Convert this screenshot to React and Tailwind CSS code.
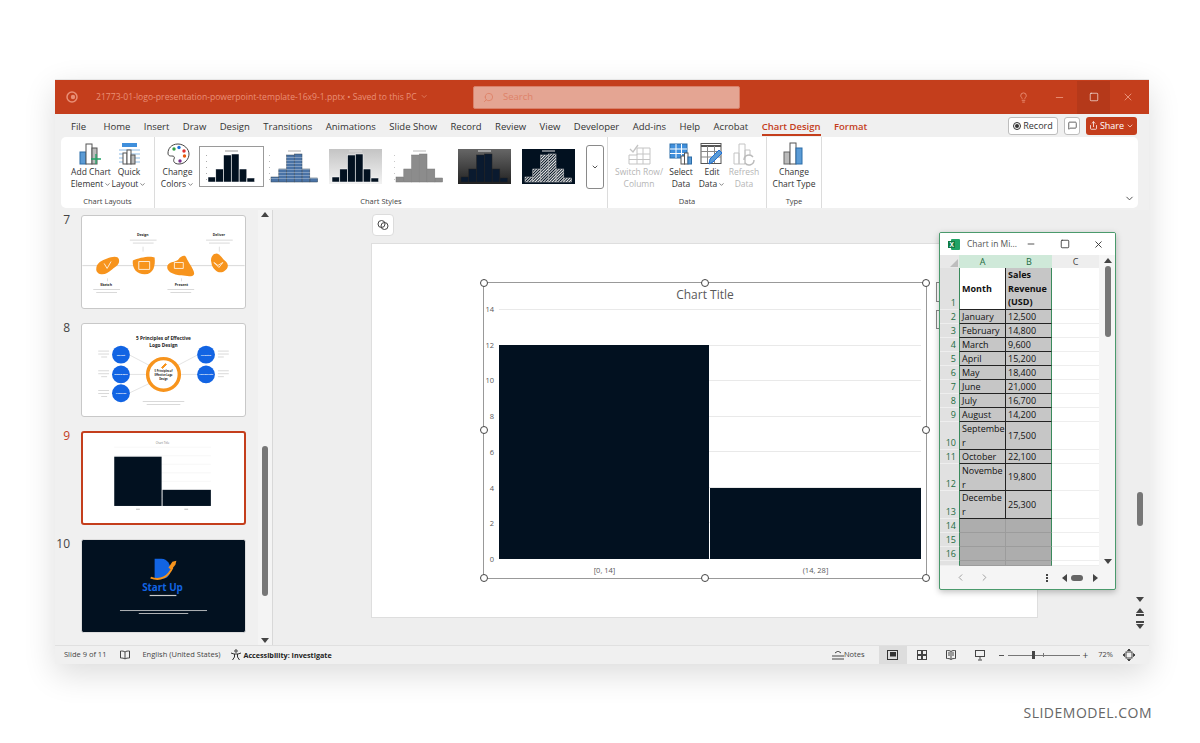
import React from "react";
import { ChevronDown, ChevronLeft, ChevronRight, Lightbulb, MessageSquare, Search, Share, X, Minus, Square } from "lucide-react";

const tabs = ["File", "Home", "Insert", "Draw", "Design", "Transitions", "Animations", "Slide Show", "Record", "Review", "View", "Developer", "Add-ins", "Help", "Acrobat"];

const AddChartIcon = () => (
  <svg width="24" height="24" viewBox="0 0 24 24">
    <rect x="1" y="10" width="6" height="12" fill="#5b9bd5" stroke="#2b6ca8" />
    <rect x="7" y="2" width="6" height="20" fill="#fff" stroke="#555" />
    <rect x="13" y="6" width="5" height="16" fill="#bbb" stroke="#555" />
    <path d="M17 12v10M12 17h10" stroke="#21a366" strokeWidth="1.3" />
  </svg>
);

const QuickLayoutIcon = () => (
  <svg width="24" height="24" viewBox="0 0 24 24">
    <rect x="5" y="1" width="15" height="4" fill="#3f8fdc" />
    <path d="M2 8h21M2 12h21M2 16h21M2 20h21" stroke="#8dbbe6" />
    <rect x="6" y="11" width="4" height="11" fill="#fff" stroke="#555" />
    <rect x="10" y="8" width="4" height="14" fill="#fff" stroke="#555" />
    <rect x="14" y="13" width="4" height="9" fill="#bbb" stroke="#555" />
  </svg>
);

const PaletteIcon = () => (
  <svg width="24" height="24" viewBox="0 0 24 24">
    <path d="M12 2C5 2 2 7 2 11c0 3 2 3 4 3s3 1 2 3 0 5 5 5c6 0 10-5 10-10S18 2 12 2z" fill="#fff" stroke="#444" />
    <circle cx="8" cy="7" r="1.7" fill="#2f9e44" />
    <circle cx="13" cy="5.5" r="1.7" fill="#1c6fd8" />
    <circle cx="18" cy="9" r="1.7" fill="#e03131" />
    <circle cx="18.5" cy="14" r="1.7" fill="#e8590c" />
    <circle cx="14" cy="19" r="1.7" fill="#7b2d8e" />
  </svg>
);

const SwitchIcon = () => (
  <svg width="24" height="24" viewBox="0 0 24 24">
    <path d="M10 6h13v16H2V13h8zM2 17.500h21M10 12v10M16 6v16M10 12h13" fill="none" stroke="#c4c4c4" />
    <path d="M3 7l3 3 5-7" fill="none" stroke="#c4c4c4" strokeWidth="1.3" />
  </svg>
);

const SelectDataIcon = () => (
  <svg width="24" height="24" viewBox="0 0 24 24">
    <rect x="1" y="2" width="17" height="14" fill="#3f8fdc" stroke="#2b6ca8" />
    <path d="M1 7h17M1 11.500h17M7 2v14M12.500 2v14" stroke="#fff" />
    <rect x="12" y="14" width="3.500" height="8" fill="#fff" stroke="#555" />
    <rect x="15.500" y="11" width="3.500" height="11" fill="#fff" stroke="#555" />
    <rect x="19" y="15" width="3.500" height="7" fill="#5b9bd5" stroke="#2b6ca8" />
  </svg>
);

const EditDataIcon = () => (
  <svg width="24" height="24" viewBox="0 0 24 24">
    <rect x="1" y="1.500" width="20" height="20" fill="#fff" stroke="#555" />
    <path d="M1 4h20" stroke="#555" strokeWidth="2" />
    <path d="M1 9.500h20M1 15h20M7.500 4v17M14.500 4v17" stroke="#888" />
    <path d="M9 22l1-5 9-9 3 3-9 9z" fill="#5b9bd5" stroke="#1c6fd8" />
  </svg>
);

const RefreshIcon = () => (
  <svg width="24" height="24" viewBox="0 0 24 24">
    <path d="M2 22V11h5v11zM7 22V2h6v20zM13 22V8h5v6" fill="#fff" stroke="#c4c4c4" />
    <path d="M12 18a5 5 0 0 1 9-3M22 18a5 5 0 0 1-9 3" fill="none" stroke="#bbb" strokeWidth="1.4" />
  </svg>
);

const ChartTypeIcon = () => (
  <svg width="24" height="24" viewBox="0 0 24 24">
    <rect x="2" y="10" width="6" height="12" fill="#bbb" stroke="#666" />
    <rect x="8" y="1" width="6" height="21" fill="#fff" stroke="#555" />
    <rect x="14" y="6" width="6" height="16" fill="#5b9bd5" stroke="#2b6ca8" />
  </svg>
);

const RibbonBtn = ({ icon, lines, w, faded, caret }) => (
  <div className={`flex flex-col items-center shrink-0 ${faded ? "text-[#b5b5b5]" : "text-[#333]"}`} style={{ width: w }}>
    <div className="h-[24px] flex items-center mt-[5px]">{icon}</div>
    <div className="text-[8.5px] leading-[12px] text-center whitespace-nowrap">
      <div>{lines[0]}</div>
      <div className="flex items-center justify-center gap-[1px]">
        {lines[1]}
        {caret && <ChevronDown size={7} strokeWidth={2} />}
      </div>
    </div>
  </div>
);

const heights = [5, 13, 27, 28, 13, 4];

const StyleThumb = ({ id, top, bottom, fill, stroke, selected, hatch, stripes, w, axis }) => (
  <div className={`flex items-center justify-center shrink-0 h-[41px] ${selected ? "border border-[#9a9a9a] bg-white" : ""}`} style={{ width: w }}>
    <svg width="53" height="35" viewBox="0 0 53 35">
      <defs>
        <linearGradient id={id} x1="0" y1="0" x2="0" y2="1">
          <stop offset="0" stopColor={top} />
          <stop offset="1" stopColor={bottom} />
        </linearGradient>
        <pattern id="hatch" width="2" height="2" patternUnits="userSpaceOnUse" patternTransform="rotate(45)">
          <rect width="2" height="2" fill="#021120" />
          <rect width="1" height="2" fill="#eee" />
        </pattern>
      </defs>
      <rect width="53" height="35" fill={`url(#${id})`} />
      <rect x="20" y="1.500" width="13" height="1" fill={axis || "#ddd"} />
      {axis && [6, 12, 18, 24, 30].map((y) => <rect key={y} x="1" y={y} width="1" height="0.800" fill={axis} />)}
      {heights.map((h, i) => (
        <rect key={i} x={3 + i * 7.8} y={33 - h} width="7.600" height={h} fill={hatch ? "url(#hatch)" : fill} stroke={stroke} strokeWidth="0.5" />
      ))}
      {stripes && [8, 11, 14, 17, 20, 23, 26, 29].map((y) => <rect key={y} x="3" y={y} width="47" height="0.600" fill="#fff" opacity="0.5" />)}
    </svg>
  </div>
);

const Group = ({ label, w, children, pl }) => (
  <div className="flex flex-col h-full shrink-0 border-r border-[#dcdcdc]" style={{ width: w }}>
    <div className="flex flex-1" style={{ paddingLeft: pl }}>{children}</div>
    <div className="h-[12px] text-[7.500px] leading-[10px] text-center text-[#444]">{label}</div>
  </div>
);

const Thumb7 = () => (
  <svg width="100%" height="100%" viewBox="0 0 164 93">
    <rect x="0" y="49.500" width="164" height="1.200" fill="#ddd" />
    <path d="M14 54c0-7 6-9 11-11 5-2 11-3 12 1 1 5-3 7-7 10-4 3-6 5-10 5-3 0-6-2-6-5z" fill="#f7941d" />
    <path d="M51 45c6-3 18-5 22-3 1 8-1 17-10 17-8 0-13-6-12-14z" fill="#f7941d" />
    <path d="M86 50c2-4 8-3 11-6 3-4 7-5 8-2 2 5 8 12 8 16 0 4-7 3-13 2-5 0-16-3-14-10z" fill="#f7941d" />
    <path d="M130 45c0-5 3-7 6-7 4 1 5 5 9 8 3 3 3 7-2 10-6 3-10-2-12-6z" fill="#f7941d" />
    <path d="M22 48l3 5 4-7M57 46h11v8H57zM93 47h9v6h-9zM133 47l4 3 5-3-4 5z" fill="none" stroke="#fff" strokeWidth="0.800" />
    <g fontFamily="'Open Sans', sans-serif" fontWeight="700" fill="#222" fontSize="3.500" textAnchor="middle">
      <text x="61" y="20">Design</text>
      <text x="138" y="20">Deliver</text>
      <text x="24" y="71">Sketch</text>
      <text x="100" y="71">Present</text>
    </g>
    <g fill="#c8c8c8">
      <rect x="48" y="24" width="27" height="0.700" /><rect x="51" y="27" width="21" height="0.700" />
      <rect x="125" y="24" width="27" height="0.700" /><rect x="128" y="27" width="21" height="0.700" />
      <rect x="11" y="74" width="27" height="0.700" /><rect x="14" y="77" width="21" height="0.700" />
      <rect x="86" y="74" width="27" height="0.700" /><rect x="89" y="77" width="21" height="0.700" />
      <rect x="61" y="31" width="0.600" height="5" /><rect x="138" y="31" width="0.600" height="5" />
      <rect x="25" y="63" width="0.600" height="3" /><rect x="100" y="63" width="0.600" height="3" />
    </g>
  </svg>
);

const Thumb8 = () => (
  <svg width="100%" height="100%" viewBox="0 0 164 93">
    <path d="M47 31L68 42M47 51H64M47 70L68 60M117 31L96 42M117 51H100" stroke="#ddd" strokeWidth="0.800" />
    <circle cx="82" cy="51" r="16" fill="#fff" stroke="#f7941d" strokeWidth="3.500" />
    <path d="M80 44l4-4 1 1-4 4z" fill="#f7941d" stroke="#f7941d" />
    <g fill="#1264e3">
      <circle cx="39" cy="31" r="9" /><circle cx="39" cy="51" r="9" /><circle cx="39" cy="70" r="9" />
      <circle cx="125" cy="31" r="9" /><circle cx="125" cy="51" r="9" />
    </g>
    <g fontFamily="'Open Sans', sans-serif" fontWeight="700" textAnchor="middle">
      <text x="82" y="16" fontSize="4.800" fill="#222">5 Principles of Effective</text>
      <text x="82" y="23" fontSize="4.800" fill="#222">Logo Design</text>
      <text x="82" y="49" fontSize="2.600" fill="#222">5 Principles of</text>
      <text x="82" y="53" fontSize="2.600" fill="#222">Effective Logo</text>
      <text x="82" y="57" fontSize="2.600" fill="#222">Design</text>
      <g fill="#fff" fontSize="2.400">
        <text x="39" y="32">Weight</text>
        <text x="39" y="52">Memorable</text>
        <text x="39" y="71">Timeless</text>
        <text x="125" y="32">Versatile</text>
        <text x="125" y="52">Appropriate</text>
      </g>
    </g>
    <g fill="#c8c8c8">
      <rect x="16" y="27" width="11" height="0.700" /><rect x="16" y="30" width="11" height="0.700" /><rect x="19" y="33" width="6" height="0.700" />
      <rect x="16" y="47" width="11" height="0.700" /><rect x="16" y="50" width="11" height="0.700" /><rect x="19" y="53" width="6" height="0.700" />
      <rect x="16" y="67" width="11" height="0.700" /><rect x="16" y="70" width="11" height="0.700" /><rect x="19" y="73" width="6" height="0.700" />
      <rect x="137" y="27" width="11" height="0.700" /><rect x="137" y="30" width="11" height="0.700" /><rect x="137" y="33" width="6" height="0.700" />
      <rect x="137" y="47" width="11" height="0.700" /><rect x="137" y="50" width="11" height="0.700" /><rect x="137" y="53" width="6" height="0.700" />
      <rect x="61" y="78" width="42" height="0.700" /><rect x="65" y="81" width="34" height="0.700" />
    </g>
  </svg>
);

const Thumb9 = () => (
  <svg width="100%" height="100%" viewBox="0 0 166 95">
    <path d="M31 15H133M31 24H133M31 33H133M31 42H133M31 51H133M31 60H133M31 69H133" stroke="#eee" strokeWidth="0.500" />
    <text x="82" y="12" fontSize="3" fill="#777" textAnchor="middle" fontFamily="'Open Sans', sans-serif">Chart Title</text>
    <rect x="31" y="25" width="50" height="52" fill="#021120" />
    <rect x="82" y="60" width="51" height="17" fill="#021120" />
    <rect x="54" y="80" width="4" height="0.800" fill="#aaa" />
    <rect x="105" y="80" width="4" height="0.800" fill="#aaa" />
  </svg>
);

const Thumb10 = () => (
  <svg width="100%" height="100%" viewBox="0 0 164 93">
    <rect width="164" height="93" fill="#021120" />
    <path d="M73 19h7c6 0 9 6 9 11 0 5-3 9-8 9h-8z" fill="#1264e3" />
    <path d="M69 38c10 4 18-1 22-10" fill="none" stroke="#f7941d" strokeWidth="2" />
    <path d="M87 28l4-6 4-1-1 4-4 5z" fill="#f7941d" />
    <text x="81" y="52" fontSize="10" fontWeight="700" fill="#1264e3" textAnchor="middle" fontFamily="'Open Sans', sans-serif">Start Up</text>
    <rect x="68" y="55.500" width="27" height="1.200" fill="#ccc" />
    <rect x="38" y="71" width="88" height="0.800" fill="#ddd" />
    <rect x="57" y="74" width="50" height="0.800" fill="#ddd" />
  </svg>
);

const Slide = ({ n, active, dark, children }) => (
  <div className="flex shrink-0 h-[94px] mb-[14px]">
    <div className={`w-[26px] text-[12px] leading-[14px] text-right pr-[11px] -mt-[2px] ${active ? "text-[#c43e1c]" : "text-[#444]"}`}>{n}</div>
    <div className={`w-[165px] rounded-[3px] overflow-hidden ${active ? "border-2 border-[#c43e1c] bg-white" : dark ? "bg-[#021120] border border-[#ddd]" : "bg-white border border-[#c8c8c8]"}`}>
      {children}
    </div>
  </div>
);

const gridLabels = [14, 12, 10, 8, 6, 4, 2, 0];

const Handle = ({ className }) => (
  <div className={`absolute w-[8px] h-[8px] rounded-full bg-white border border-[#444] ${className}`} />
);

const rowsData = [
  { n: 1, h: 42 },
  { n: 2, h: 14, a: "January", b: "12,500" },
  { n: 3, h: 14, a: "February", b: "14,800" },
  { n: 4, h: 14, a: "March", b: "9,600" },
  { n: 5, h: 14, a: "April", b: "15,200" },
  { n: 6, h: 14, a: "May", b: "18,400" },
  { n: 7, h: 14, a: "June", b: "21,000" },
  { n: 8, h: 14, a: "July", b: "16,700" },
  { n: 9, h: 14, a: "August", b: "14,200" },
  { n: 10, h: 28, a: "Septembe", a2: "r", b: "17,500" },
  { n: 11, h: 14, a: "October", b: "22,100" },
  { n: 12, h: 27, a: "Novembe", a2: "r", b: "19,800" },
  { n: 13, h: 28, a: "Decembe", a2: "r", b: "25,300" },
  { n: 14, h: 14 },
  { n: 15, h: 14 },
  { n: 16, h: 14 },
  { n: "", h: 5 },
];

const ExcelWindow = () => (
  <div className="absolute left-[884px] top-[152px] w-[177px] h-[358px] bg-[#f5f5f5] border border-[#4a9a6c] rounded-[2px] flex flex-col overflow-hidden shadow-[0_2px_6px_rgba(0,0,0,0.25)]">
    <div className="h-[22px] shrink-0 bg-white flex items-center pl-[8px] text-[#555]">
      <svg width="12" height="11" viewBox="0 0 12 11">
        <rect x="3" y="0" width="9" height="11" rx="1" fill="#21a366" />
        <rect x="0" y="2" width="7" height="7" fill="#107c41" />
        <text x="1.500" y="8" fontSize="6.500" fontWeight="700" fill="#fff" fontFamily="'Liberation Sans', sans-serif">X</text>
      </svg>
      <span className="ml-[7px] text-[8.500px] w-[58px] whitespace-nowrap">Chart in Mi...</span>
      <Minus size={10} className="ml-[1px] text-[#333]" />
      <Square size={10} className="ml-[24px] text-[#333]" />
      <X size={11} className="ml-[23px] text-[#333]" />
    </div>
    <div className="flex flex-1 min-h-0">
      <div className="w-[160px] shrink-0 overflow-hidden">
        <div className="flex h-[13px] text-[9px] leading-[13px] text-center text-[#444]">
          <div className="w-[19px] bg-[#e8e8e8] flex items-end justify-end">
            <div className="w-0 h-0 border-l-[8px] border-l-transparent border-b-[8px] border-b-[#bdbdbd] mr-[1px] mb-[1px]" />
          </div>
          <div className="w-[47px] bg-[#cfe9d9] text-[#1d6b41]">A</div>
          <div className="w-[46px] bg-[#cfe9d9] text-[#1d6b41]">B</div>
          <div className="w-[47px] bg-[#eeeeee]">C</div>
        </div>
        {rowsData.map((r) => {
          const empty = r.n !== 1 && !r.a;
          return (
            <div key={r.n} className="flex text-[9px] leading-[13.500px] text-[#111]" style={{ height: r.h }}>
              <div className="w-[19px] shrink-0 bg-[#e1e1e1] text-[#1d6b41] text-right pr-[3px] flex items-end justify-end border-b border-[#eeeeee]">{r.n}</div>
              {r.n === 1 ? (
                <>
                  <div className="w-[47px] shrink-0 bg-white font-bold pl-[2px] flex items-center border-l border-[#3a8a5c] border-b border-b-[#222] border-r border-r-[#222]">Month</div>
                  <div className="w-[46px] shrink-0 bg-[#c6c6c6] font-bold pl-[2px] border-b border-[#222] border-r border-r-[#3a8a5c]">
                    Sales<br />Revenue<br />(USD)
                  </div>
                </>
              ) : empty ? (
                <>
                  <div className="w-[47px] shrink-0 bg-[#adadad] border-l border-[#3a8a5c] border-r border-r-[#9c9c9c] border-b border-b-[#9c9c9c]" />
                  <div className="w-[46px] shrink-0 bg-[#adadad] border-r border-[#3a8a5c] border-b border-b-[#9c9c9c]" />
                </>
              ) : (
                <>
                  <div className="w-[47px] shrink-0 bg-[#c6c6c6] pl-[2px] border-l border-[#3a8a5c] border-b border-b-[#222] border-r border-r-[#222] whitespace-nowrap overflow-hidden">
                    {r.a}
                    {r.a2 && <div>{r.a2}</div>}
                  </div>
                  <div className="w-[46px] shrink-0 bg-[#c6c6c6] pl-[2px] border-b border-[#222] border-r border-r-[#3a8a5c] flex items-center">{r.b}</div>
                </>
              )}
              <div className="w-[47px] shrink-0 bg-white border-b border-[#eeeeee]" />
            </div>
          );
        })}
      </div>
      <div className="flex-1 flex flex-col items-center pt-[3px]">
        <div className="w-0 h-0 border-x-[4px] border-x-transparent border-b-[5px] border-b-[#444]" />
        <div className="w-[6px] h-[71px] mt-[3px] rounded-full bg-[#777]" />
        <div className="flex-1" />
        <div className="w-0 h-0 border-x-[4px] border-x-transparent border-t-[5px] border-t-[#444] mb-[2px]" />
      </div>
    </div>
    <div className="h-[23px] shrink-0 flex items-center text-[#999]">
      <ChevronLeft size={11} className="ml-[15px]" />
      <ChevronRight size={11} className="ml-[13px]" />
      <div className="ml-[56px] flex flex-col gap-[1px]">
        <div className="w-[2px] h-[2px] bg-[#444]" /><div className="w-[2px] h-[2px] bg-[#444]" /><div className="w-[2px] h-[2px] bg-[#444]" />
      </div>
      <div className="ml-[14px] flex items-center gap-[4px]">
        <div className="w-0 h-0 border-y-[4px] border-y-transparent border-r-[5px] border-r-[#444]" />
        <div className="w-[12px] h-[6px] rounded-full bg-[#666]" />
        <div className="w-0 h-0 border-y-[4px] border-y-transparent border-l-[5px] border-l-[#444] ml-[6px]" />
      </div>
    </div>
  </div>
);

export default function App() {
  return (
    <div className="w-[1200px] h-[743px] bg-white pt-[79px] pl-[55px] overflow-hidden text-[#333]" style={{ fontFamily: "'Open Sans', sans-serif" }}>
      <div className="relative w-[1094px] h-[585px] bg-[#f0f0f0] flex flex-col shadow-[0_10px_30px_rgba(0,0,0,0.14)] border-t border-[#e6e6e6]">
        {/* title bar */}
        <div className="h-[34px] shrink-0 bg-[#c43e1c] flex items-center text-[#e98f76]">
          <svg width="12" height="12" viewBox="0 0 12 12" className="ml-[11px]">
            <circle cx="6" cy="6" r="5" fill="none" stroke="#e98f76" strokeWidth="1.500" />
            <circle cx="7" cy="6" r="2.200" fill="#e98f76" />
          </svg>
          <span className="ml-[18px] w-[332px] text-[8.600px] whitespace-nowrap flex items-center gap-[3px]">
            21773-01-logo-presentation-powerpoint-template-16x9-1.pptx • Saved to this PC
            <ChevronDown size={9} />
          </span>
          <div className="ml-[45px] w-[267px] h-[23px] rounded-[2px] bg-[#e4a593] border border-[#d9816a] flex items-center pl-[9px] text-[#de8268] text-[9.500px]">
            <Search size={11} className="-scale-x-100" />
            <span className="ml-[9px]">Search</span>
          </div>
          <Lightbulb size={11} className="ml-[278px]" />
          <Minus size={11} className="ml-[25px]" />
          <div className="ml-[12px] w-[33px] h-[33px] bg-[#b5391a] flex items-center justify-center">
            <Square size={10} strokeWidth={1.500} className="text-white" />
          </div>
          <X size={12} className="ml-[12px]" />
        </div>

        {/* tabs */}
        <div className="h-[23px] shrink-0 flex items-center text-[9.500px] pl-[16px]">
          <div className="flex gap-[13.450px] whitespace-nowrap text-[#333] mt-[3px]">
            {tabs.map((t) => (
              <span key={t} className={t === "File" ? "mr-[4px]" : ""}>{t}</span>
            ))}
            <span className="text-[#c43e1c] font-semibold border-b-2 border-[#c43e1c] -mb-[2px]">Chart Design</span>
            <span className="text-[#c43e1c] font-semibold">Format</span>
          </div>
          <div className="ml-auto mr-[12px] flex items-center">
            <div className="w-[50px] h-[18px] bg-white border border-[#bdbdbd] rounded-[3px] flex items-center justify-center gap-[2px] text-[9px]">
              <div className="w-[8px] h-[8px] rounded-full border border-[#333] flex items-center justify-center">
                <div className="w-[4px] h-[4px] rounded-full bg-[#333]" />
              </div>
              Record
            </div>
            <div className="ml-[6px] w-[16px] h-[18px] bg-white border border-[#bdbdbd] rounded-[3px] flex items-center justify-center">
              <MessageSquare size={9} />
            </div>
            <div className="ml-[6px] w-[51px] h-[18px] bg-[#c43e1c] rounded-[3px] flex items-center justify-center gap-[2px] text-white text-[9px]">
              <Share size={9} />
              Share
              <ChevronDown size={8} />
            </div>
          </div>
        </div>

        {/* ribbon */}
        <div className="h-[71px] shrink-0 mx-[6px] w-[1077px] bg-white rounded-[5px] flex items-stretch relative">
          <Group label="Chart Layouts" w={94} pl={10}>
            <RibbonBtn w={40} icon={<AddChartIcon />} lines={["Add Chart", "Element"]} caret />
            <RibbonBtn w={36} icon={<QuickLayoutIcon />} lines={["Quick", "Layout"]} caret />
          </Group>
          <Group label="Chart Styles" w={453} pl={2}>
            <RibbonBtn w={41} icon={<PaletteIcon />} lines={["Change", "Colors"]} caret />
            <div className="flex items-center ml-[1px] h-[45px] mt-[7px] gap-[1px]">
              <StyleThumb id="s1" selected top="#ffffff" bottom="#ffffff" axis="#999" fill="#021120" stroke="#fff" w={65} />
              <StyleThumb id="s2" top="#ffffff" bottom="#ffffff" axis="#aaa" fill="#4a73a6" stroke="#345" stripes w={58} />
              <StyleThumb id="s3" top="#c4c4c4" bottom="#f2f2f2" fill="#021120" stroke="#fff" w={62} />
              <StyleThumb id="s4" top="#ffffff" bottom="#ffffff" axis="#bbb" fill="#8c8c8c" stroke="#777" w={64} />
              <StyleThumb id="s5" top="#666666" bottom="#222222" fill="#0a1a2f" stroke="#222" w={64} />
              <StyleThumb id="s6" top="#021120" bottom="#021120" fill="#eee" stroke="#ccc" hatch w={63} />
              <div className="w-[18px] h-[44px] ml-[5px] rounded-[3px] border border-[#8a8a8a] bg-white flex items-center justify-center shrink-0">
                <ChevronDown size={8} strokeWidth={2.500} />
              </div>
            </div>
          </Group>
          <Group label="Data" w={159} pl={8}>
            <RibbonBtn w={46} faded icon={<SwitchIcon />} lines={["Switch Row/", "Column"]} />
            <RibbonBtn w={38} icon={<SelectDataIcon />} lines={["Select", "Data"]} />
            <RibbonBtn w={24} icon={<EditDataIcon />} lines={["Edit", "Data"]} caret />
            <RibbonBtn w={40} faded icon={<RefreshIcon />} lines={["Refresh", "Data"]} />
          </Group>
          <Group label="Type" w={55} pl={2}>
            <RibbonBtn w={50} icon={<ChartTypeIcon />} lines={["Change", "Chart Type"]} />
          </Group>
          <ChevronDown size={11} className="absolute right-[3px] bottom-[4px] text-[#444]" />
        </div>

        {/* body */}
        <div className="flex-1 min-h-0 flex mt-[2px] border-b border-[#e0e0e0]">
          <div className="w-[218px] shrink-0 flex border-r border-[#d8d8d8]">
            <div className="w-[203px] shrink-0 overflow-hidden pt-[5px]">
              <Slide n={7}><Thumb7 /></Slide>
              <Slide n={8}><Thumb8 /></Slide>
              <Slide n={9} active><Thumb9 /></Slide>
              <Slide n={10} dark><Thumb10 /></Slide>
              <div className="flex h-[2px] overflow-hidden">
                <div className="w-[26px] text-[12px] leading-[14px] text-right pr-[11px] text-[#444]">11</div>
                <div className="w-[165px] bg-[#7fa3bd]" />
              </div>
            </div>
            <div className="flex-1 bg-[#f4f4f4] flex flex-col items-center pt-[2px] pb-[2px]">
              <div className="w-0 h-0 border-x-[4px] border-x-transparent border-b-[5px] border-b-[#444]" />
              <div className="w-[6px] h-[150px] mt-[229px] rounded-full bg-[#777]" />
              <div className="flex-1" />
              <div className="w-0 h-0 border-x-[4px] border-x-transparent border-t-[5px] border-t-[#444]" />
            </div>
          </div>

          <div className="flex-1 flex bg-[#eeeeee]">
            <div className="w-[858px] shrink-0 pl-[98px]">
              <div className="w-[22px] h-[22px] mt-[4px] ml-[1px] bg-white border border-[#dcdcdc] rounded-[4px] flex items-center justify-center">
                <svg width="12" height="12" viewBox="0 0 12 12" fill="none" stroke="#444">
                  <circle cx="4.500" cy="5" r="3.500" />
                  <circle cx="7.500" cy="7" r="3.500" />
                </svg>
              </div>
              <div className="w-[667px] h-[375px] mt-[7px] bg-white border border-[#dedede] pl-[111px] pt-[38px]">
                <div className="relative w-[444px] h-[297px] border border-[#999]">
                  <div className="absolute left-[452px] -top-[1px] w-[20px] h-[20px] bg-white border border-[#888]" />
                  <div className="absolute left-[452px] top-[27px] w-[20px] h-[19px] bg-white border border-[#888]" />
                  <Handle className="-left-[4px] -top-[4px]" />
                  <Handle className="left-[217px] -top-[4px]" />
                  <Handle className="-right-[4px] -top-[4px]" />
                  <Handle className="-left-[4px] top-[143px]" />
                  <Handle className="-right-[4px] top-[143px]" />
                  <Handle className="-left-[4px] -bottom-[4px]" />
                  <Handle className="left-[217px] -bottom-[4px]" />
                  <Handle className="-right-[4px] -bottom-[4px]" />
                  <div className="h-[26px] text-[12px] leading-[24px] text-center text-[#595959]">Chart Title</div>
                  <div className="flex">
                    <div className="w-[15px] h-[250px] flex flex-col justify-between text-right text-[7.500px] text-[#595959] leading-[0]">
                      {gridLabels.map((l) => (
                        <span key={l} className="pr-[5px] h-0">{l}</span>
                      ))}
                    </div>
                    <div className="relative w-[422px] h-[250px] flex items-end gap-[1px]">
                      <div className="absolute inset-0 flex flex-col justify-between">
                        {gridLabels.map((l) => (
                          <div key={l} className="h-0 border-t border-[#e9e9e9]" />
                        ))}
                      </div>
                      <div className="relative w-[210px] h-[214px] bg-[#021120]" />
                      <div className="relative w-[211px] h-[71px] bg-[#021120]" />
                    </div>
                  </div>
                  <div className="flex pl-[15px] mt-[6px] text-[7.500px] text-[#595959]">
                    <div className="w-[211px] text-center">[0, 14]</div>
                    <div className="w-[211px] text-center">(14, 28]</div>
                  </div>
                </div>
              </div>
            </div>
            <div className="flex-1 flex flex-col items-center text-[#444]">
              <div className="w-[6px] h-[34px] mt-[282px] rounded-full bg-[#777]" />
              <div className="w-0 h-0 mt-[71px] border-x-[4px] border-x-transparent border-t-[5px] border-t-[#444]" />
              <div className="mt-[6px] w-0 h-0 border-x-[4px] border-x-transparent border-b-[5px] border-b-[#444]" />
              <div className="mt-[1px] w-[8px] border-b-[2px] border-[#444]" />
              <div className="mt-[5px] w-[8px] border-b-[2px] border-[#444]" />
              <div className="mt-[1px] w-0 h-0 border-x-[4px] border-x-transparent border-t-[5px] border-t-[#444]" />
            </div>
          </div>
        </div>

        {/* status bar */}
        <div className="h-[18px] shrink-0 flex items-center text-[7.500px] text-[#444] whitespace-nowrap">
          <span className="ml-[9px]">Slide 9 of 11</span>
          <svg width="10" height="10" viewBox="0 0 10 10" fill="none" stroke="#444" className="ml-[14px]">
            <path d="M5 2C4 1 2 1 .5 1v7C2 8 4 8 5 9c1-1 3-1 4.500-1V1C8 1 6 1 5 2zM5 2v7" />
          </svg>
          <span className="ml-[12px]">English (United States)</span>
          <svg width="12" height="12" viewBox="0 0 12 12" fill="none" stroke="#333" className="ml-[10px]">
            <circle cx="6" cy="2" r="1.200" />
            <path d="M1 4l3 1h4l3-1M4.500 5v3l-2 3M7.500 5v3l2 3" />
          </svg>
          <span className="ml-[1px] font-bold text-[7.200px] text-[#222]">Accessibility: Investigate</span>
          <div className="ml-auto flex items-center h-full">
            <svg width="12" height="9" viewBox="0 0 12 9" fill="none" stroke="#444">
              <path d="M3 2l3-2 3 2M0 5h12M0 8h12" />
            </svg>
            <span>Notes</span>
            <div className="ml-[14px] w-[28px] h-full bg-[#dddddd] flex items-center justify-center">
              <svg width="11" height="10" viewBox="0 0 11 10" fill="none" stroke="#333"><rect x=".5" y=".5" width="10" height="9" /><rect x="3.500" y="2.500" width="5" height="3.500" fill="#333" /></svg>
            </div>
            <svg width="10" height="10" viewBox="0 0 10 10" fill="none" stroke="#444" className="ml-[10px]"><rect x=".5" y=".5" width="4" height="4" /><rect x="5.500" y=".5" width="4" height="4" /><rect x=".5" y="5.500" width="4" height="4" /><rect x="5.500" y="5.500" width="4" height="4" /></svg>
            <svg width="10" height="10" viewBox="0 0 10 10" fill="none" stroke="#444" className="ml-[19px]"><path d="M5 1.500C4 .5 2 .5.500.5v8C2 8.500 4 8.500 5 9.500c1-1 3-1 4.500-1v-8C8 .5 6 .5 5 1.500zM5 1.500v8M2 3h2M2 5h2M6 3h2M6 5h2" /></svg>
            <svg width="10" height="11" viewBox="0 0 10 11" fill="none" stroke="#444" className="ml-[19px]"><rect x=".5" y=".5" width="9" height="6" /><path d="M5 6.500v3M3 10h4" /></svg>
            <span className="ml-[14px] w-[5px] border-t border-[#555]" />
            <div className="ml-[4px] w-[72px] h-[9px] flex items-center relative">
              <div className="w-full border-t border-[#777]" />
              <div className="absolute left-[24px] w-[3px] h-[8px] bg-[#444]" />
              <div className="absolute left-[35px] w-px h-[4px] bg-[#777]" />
            </div>
            <span className="ml-[3px] text-[10px] leading-none">+</span>
            <span className="ml-[10px]">72%</span>
            <svg width="12" height="12" viewBox="0 0 12 12" fill="none" stroke="#444" className="ml-[10px] mr-[14px]">
              <rect x="3" y="3" width="6" height="6" /><path d="M6 0l-1.500 1.500h3zM6 12l-1.500-1.500h3zM0 6l1.500-1.500v3zM12 6l-1.500-1.500v3z" fill="#444" />
            </svg>
          </div>
        </div>

        <ExcelWindow />
      </div>
      <div className="mt-[40px] w-[1097px] text-right text-[14px] leading-[18px] tracking-[0.5px] text-[#666]">SLIDEMODEL.COM</div>
    </div>
  );
}
